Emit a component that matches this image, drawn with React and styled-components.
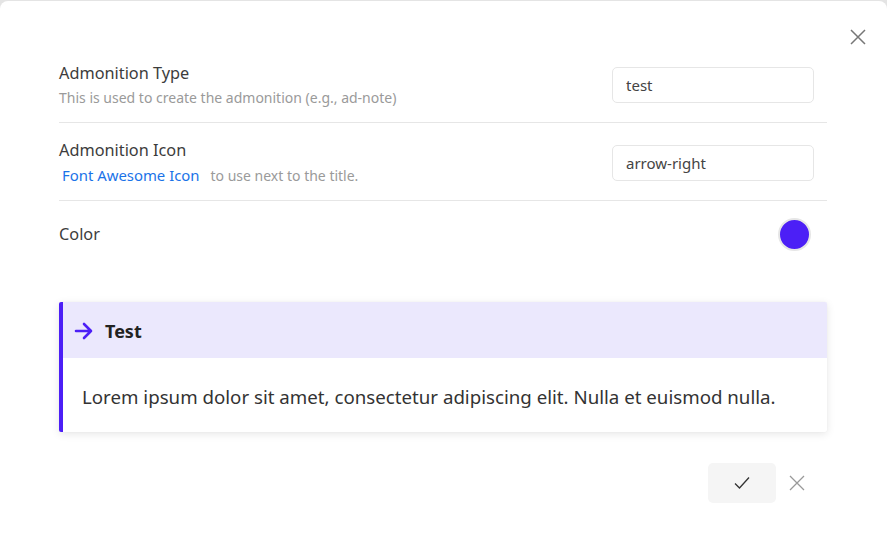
import React from "react";
import styled, { createGlobalStyle } from "styled-components";

const Global = createGlobalStyle`
  html, body { margin: 0; padding: 0; background: #e4e4e4; }
  body { font-family: "Noto Sans", "Open Sans", sans-serif; }
  * { box-sizing: border-box; }
`;

const Page = styled.div`
  padding-top: 1px;
  width: 887px;
  height: 553px;
`;

const Modal = styled.div`
  position: relative;
  background: #fff;
  border-radius: 8px 8px 0 0;
  height: 552px;
  padding: 52px 60px 0 59px;
`;

const CloseBtn = styled.button`
  position: absolute;
  top: 27px;
  right: 20px;
  width: 18px;
  height: 18px;
  padding: 0;
  border: 0;
  background: none;
  display: flex;
  align-items: center;
  justify-content: center;
  color: #777;
`;

const Row = styled.div`
  display: flex;
  align-items: center;
  justify-content: space-between;
  height: ${(p) => p.h || 78}px;
  padding-bottom: ${(p) => p.pb || 0}px;
  padding-top: ${(p) => p.pt || 0}px;
  border-bottom: ${(p) => (p.last ? "none" : "1px solid #e6e6e6")};
  padding-right: 13px;
`;

const Info = styled.div`
  display: flex;
  flex-direction: column;
  gap: 4px;
`;

const Label = styled.div`
  font-size: 16.3px;
  color: #3c3c3c;
  line-height: 22px;
`;

const Desc = styled.div`
  font-size: 14px;
  color: #9a9a9a;
  line-height: 20px;
`;

const Link = styled.a`
  color: #1a73e8;
  font-size: 14.9px;
  text-decoration: none;
  margin: 0 11px 0 3px;
`;

const Input = styled.input`
  width: 202px;
  height: 36px;
  border: 1px solid #e6e6e6;
  border-radius: 5px;
  padding: 0 13px;
  font: inherit;
  font-size: 15px;
  color: #444;
  outline: none;
`;

const Swatch = styled.div`
  width: 33px;
  height: 33px;
  border-radius: 50%;
  background: #4c1ff6;
  border: 2px solid #e6e6e6;
  margin-right: 3px;
`;

const Admonition = styled.div`
  margin-top: 35px;
  border-left: 4px solid #4c1ff6;
  border-radius: 2px;
  box-shadow: 0 2px 8px rgba(0, 0, 0, 0.1), 0 0 1px rgba(0, 0, 0, 0.08);
  overflow: hidden;
`;

const AdTitle = styled.div`
  display: flex;
  align-items: center;
  gap: 11px;
  height: 56px;
  background: #ebe8fd;
  padding-left: 11px;
  padding-top: 2px;
  font-size: 18px;
  font-weight: 700;
  color: #222;
`;

const AdBody = styled.div`
  padding: 25px 19px 21px;
  font-size: 18.7px;
  line-height: 28px;
  color: #333;
`;

const Footer = styled.div`
  display: flex;
  justify-content: flex-end;
  align-items: center;
  gap: 11px;
  margin-top: 31px;
  padding-right: 20px;
`;

const OkBtn = styled.button`
  width: 68px;
  height: 40px;
  border: 0;
  border-radius: 5px;
  background: #f5f5f5;
  display: flex;
  align-items: center;
  justify-content: center;
  color: #333;
`;

const CancelBtn = styled.button`
  width: 20px;
  height: 20px;
  border: 0;
  padding: 0;
  background: none;
  display: flex;
  align-items: center;
  justify-content: center;
  color: #999;
`;

const Cross = ({ size = 16, stroke = 1.4 }) => (
  <svg width={size} height={size} viewBox="0 0 16 16" fill="none">
    <path d="M1 1L15 15M15 1L1 15" stroke="currentColor" strokeWidth={stroke} />
  </svg>
);

export default function App() {
  return (
    <Page>
      <Global />
      <Modal>
        <CloseBtn aria-label="close">
          <Cross size={16} stroke={1.5} />
        </CloseBtn>
        <Row h={70} pb={6}>
          <Info>
            <Label>Admonition Type</Label>
            <Desc>This is used to create the admonition (e.g., ad-note)</Desc>
          </Info>
          <Input defaultValue="test" />
        </Row>
        <Row pt={2}>
          <Info>
            <Label>Admonition Icon</Label>
            <Desc>
              <Link href="#">Font Awesome Icon</Link>to use next to the title.
            </Desc>
          </Info>
          <Input defaultValue="arrow-right" />
        </Row>
        <Row h={66} last>
          <Label>Color</Label>
          <Swatch />
        </Row>
        <Admonition>
          <AdTitle>
            <svg width="20" height="18" viewBox="0 0 20 18" fill="none">
              <path d="M2 9H17M10 2L17 9L10 16" stroke="#4c1ff6" strokeWidth="2.6" strokeLinecap="round" strokeLinejoin="round" />
            </svg>
            Test
          </AdTitle>
          <AdBody>
            Lorem ipsum dolor sit amet, consectetur adipiscing elit. Nulla et euismod nulla.
          </AdBody>
        </Admonition>
        <Footer>
          <OkBtn aria-label="ok">
            <svg width="16" height="14" viewBox="0 0 16 14" fill="none">
              <path d="M1 7.5L5.5 12L15 1.5" stroke="currentColor" strokeWidth="1.3" />
            </svg>
          </OkBtn>
          <CancelBtn aria-label="cancel">
            <Cross size={16} stroke={1.3} />
          </CancelBtn>
        </Footer>
      </Modal>
    </Page>
  );
}
